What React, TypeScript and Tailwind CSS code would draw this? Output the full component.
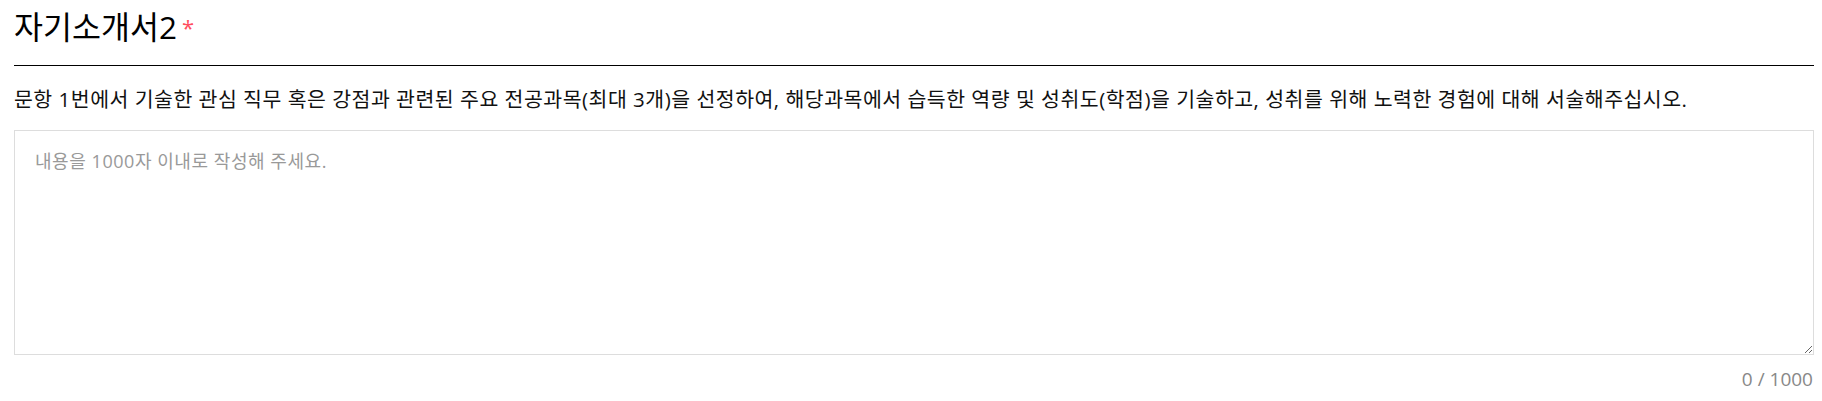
export default function App() {
  return (
    <div className="bg-white w-full h-[401px]">
      <div className="ml-[14px] w-[1800px] font-['Open_Sans','Noto_Sans_CJK_KR',sans-serif]">
        {/* 제목 */}
        <div className="flex items-start h-[66px] border-b border-black pt-[6px]">
          <h2 className="text-[31.5px] leading-[42px] text-black">자기소개서2</h2>
          <span className="text-[#ff4d5e] text-[22px] leading-[30px] ml-[5px] mt-[6px]">*</span>
        </div>
        {/* 문항 */}
        <p className="text-[20.5px] leading-[28px] text-[#111] mt-[19px] tracking-[0.5px]">
          문항 1번에서 기술한 관심 직무 혹은 강점과 관련된 주요 전공과목(최대 3개)을 선정하여, 해당과목에서 습득한 역량 및 성취도(학점)을 기술하고, 성취를 위해 노력한 경험에 대해 서술해주십시오.
        </p>
        <textarea
          className="block w-full h-[225px] mt-[17px] border border-[#dddddd] px-[20px] pt-[18px] pb-[16px] text-[18px] leading-[24px] tracking-[0.55px] text-[#333] placeholder:text-[#999] outline-none resize-y"
          placeholder="내용을 1000자 이내로 작성해 주세요."
        />
        <div className="text-right text-[19px] leading-[24px] text-[#888] mt-[12px] pr-[1px]">0 / 1000</div>
      </div>
    </div>
  );
}
